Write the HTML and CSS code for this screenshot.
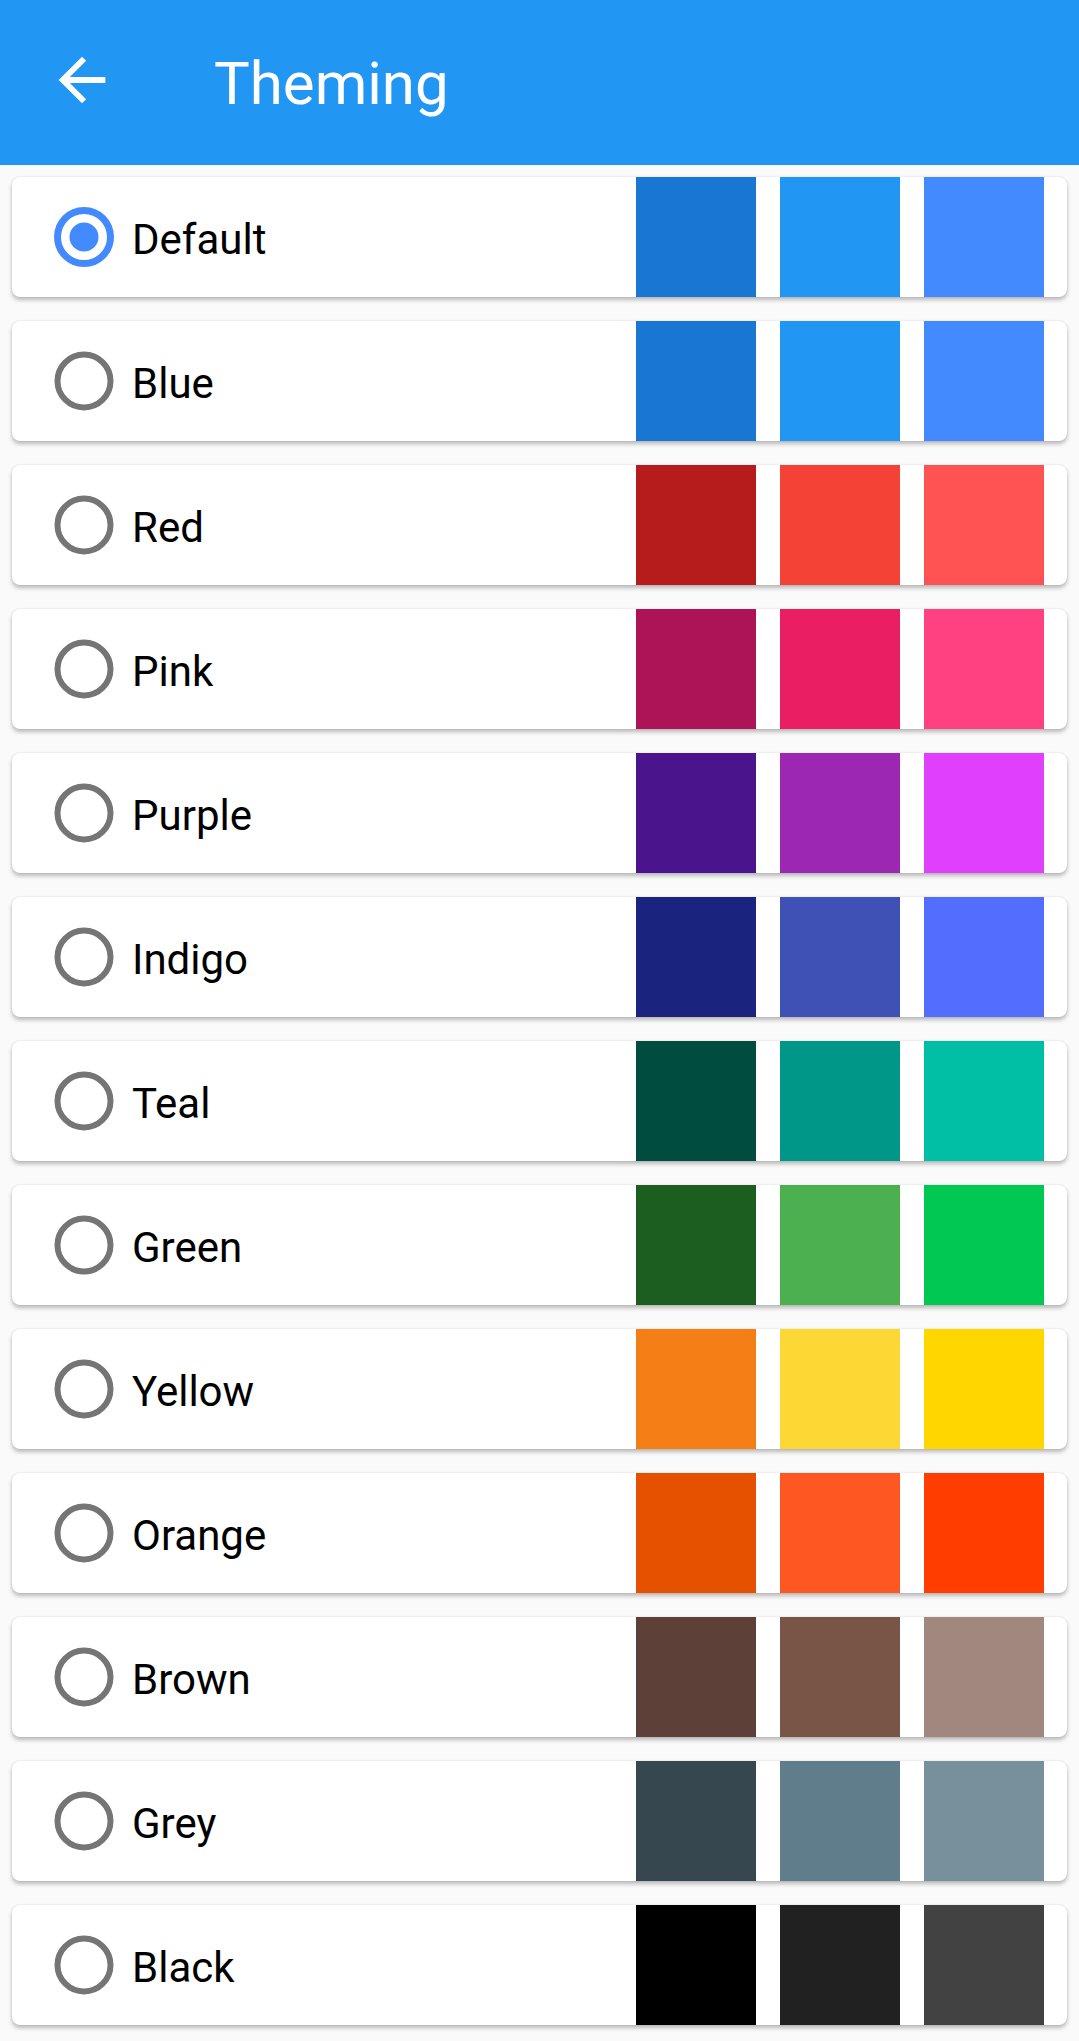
FILE: index.html
```html
<!DOCTYPE html>
<html>
<head>
<meta charset="utf-8">
<link rel="stylesheet" href="styles.css">
</head>
<body>
<header class="appbar">
  <svg class="back" viewBox="0 0 24 24" width="70" height="70"><path d="M20 11H7.83l5.59-5.59L12 4l-8 8 8 8 1.41-1.41L7.83 13H20v-2z" fill="#fff"/></svg>
  <h1 class="title">Theming</h1>
</header>
<main class="list">
  <div class="card">
    <svg class="radio" viewBox="0 0 60 60" width="60" height="60"><circle cx="30" cy="30" r="26.5" fill="none" stroke="#448AFF" stroke-width="7"/><circle cx="30" cy="30" r="14.5" fill="#448AFF"/></svg>
    <span class="label">Default</span>
    <div class="swatches"><i class="sw" style="background:#1976D2"></i><i class="sw" style="background:#2196F3"></i><i class="sw" style="background:#448AFF"></i></div>
  </div>
  <div class="card">
    <svg class="radio" viewBox="0 0 60 60" width="60" height="60"><circle cx="30" cy="30" r="26.5" fill="none" stroke="#757575" stroke-width="6"/></svg>
    <span class="label">Blue</span>
    <div class="swatches"><i class="sw" style="background:#1976D2"></i><i class="sw" style="background:#2196F3"></i><i class="sw" style="background:#448AFF"></i></div>
  </div>
  <div class="card">
    <svg class="radio" viewBox="0 0 60 60" width="60" height="60"><circle cx="30" cy="30" r="26.5" fill="none" stroke="#757575" stroke-width="6"/></svg>
    <span class="label">Red</span>
    <div class="swatches"><i class="sw" style="background:#B71C1C"></i><i class="sw" style="background:#F44336"></i><i class="sw" style="background:#FF5252"></i></div>
  </div>
  <div class="card">
    <svg class="radio" viewBox="0 0 60 60" width="60" height="60"><circle cx="30" cy="30" r="26.5" fill="none" stroke="#757575" stroke-width="6"/></svg>
    <span class="label">Pink</span>
    <div class="swatches"><i class="sw" style="background:#AD1457"></i><i class="sw" style="background:#E91E63"></i><i class="sw" style="background:#FF4081"></i></div>
  </div>
  <div class="card">
    <svg class="radio" viewBox="0 0 60 60" width="60" height="60"><circle cx="30" cy="30" r="26.5" fill="none" stroke="#757575" stroke-width="6"/></svg>
    <span class="label">Purple</span>
    <div class="swatches"><i class="sw" style="background:#4A148C"></i><i class="sw" style="background:#9C27B0"></i><i class="sw" style="background:#E040FB"></i></div>
  </div>
  <div class="card">
    <svg class="radio" viewBox="0 0 60 60" width="60" height="60"><circle cx="30" cy="30" r="26.5" fill="none" stroke="#757575" stroke-width="6"/></svg>
    <span class="label">Indigo</span>
    <div class="swatches"><i class="sw" style="background:#1A237E"></i><i class="sw" style="background:#3F51B5"></i><i class="sw" style="background:#536DFE"></i></div>
  </div>
  <div class="card">
    <svg class="radio" viewBox="0 0 60 60" width="60" height="60"><circle cx="30" cy="30" r="26.5" fill="none" stroke="#757575" stroke-width="6"/></svg>
    <span class="label">Teal</span>
    <div class="swatches"><i class="sw" style="background:#004D40"></i><i class="sw" style="background:#009688"></i><i class="sw" style="background:#00BFA5"></i></div>
  </div>
  <div class="card">
    <svg class="radio" viewBox="0 0 60 60" width="60" height="60"><circle cx="30" cy="30" r="26.5" fill="none" stroke="#757575" stroke-width="6"/></svg>
    <span class="label">Green</span>
    <div class="swatches"><i class="sw" style="background:#1B5E20"></i><i class="sw" style="background:#4CAF50"></i><i class="sw" style="background:#00C853"></i></div>
  </div>
  <div class="card">
    <svg class="radio" viewBox="0 0 60 60" width="60" height="60"><circle cx="30" cy="30" r="26.5" fill="none" stroke="#757575" stroke-width="6"/></svg>
    <span class="label">Yellow</span>
    <div class="swatches"><i class="sw" style="background:#F57F17"></i><i class="sw" style="background:#FDD835"></i><i class="sw" style="background:#FFD600"></i></div>
  </div>
  <div class="card">
    <svg class="radio" viewBox="0 0 60 60" width="60" height="60"><circle cx="30" cy="30" r="26.5" fill="none" stroke="#757575" stroke-width="6"/></svg>
    <span class="label">Orange</span>
    <div class="swatches"><i class="sw" style="background:#E65100"></i><i class="sw" style="background:#FF5722"></i><i class="sw" style="background:#FF3D00"></i></div>
  </div>
  <div class="card">
    <svg class="radio" viewBox="0 0 60 60" width="60" height="60"><circle cx="30" cy="30" r="26.5" fill="none" stroke="#757575" stroke-width="6"/></svg>
    <span class="label">Brown</span>
    <div class="swatches"><i class="sw" style="background:#5D4037"></i><i class="sw" style="background:#795548"></i><i class="sw" style="background:#A1887F"></i></div>
  </div>
  <div class="card">
    <svg class="radio" viewBox="0 0 60 60" width="60" height="60"><circle cx="30" cy="30" r="26.5" fill="none" stroke="#757575" stroke-width="6"/></svg>
    <span class="label">Grey</span>
    <div class="swatches"><i class="sw" style="background:#37474F"></i><i class="sw" style="background:#607D8B"></i><i class="sw" style="background:#78909C"></i></div>
  </div>
  <div class="card">
    <svg class="radio" viewBox="0 0 60 60" width="60" height="60"><circle cx="30" cy="30" r="26.5" fill="none" stroke="#757575" stroke-width="6"/></svg>
    <span class="label">Black</span>
    <div class="swatches"><i class="sw" style="background:#000000"></i><i class="sw" style="background:#212121"></i><i class="sw" style="background:#424242"></i></div>
  </div>
</main>
</body>
</html>
```
FILE: styles.css
```css
* { box-sizing: border-box; }
html, body { margin: 0; padding: 0; }
body {
  background: #fafafa;
  font-family: Roboto, "Noto Sans", "Liberation Sans", sans-serif;
  width: 1079px;
  height: 2041px;
  overflow: hidden;
}
.appbar {
  height: 165px;
  background: #2196F3;
  display: flex;
  align-items: center;
  padding-left: 47px;
}
.back { display: block; flex: none; margin-top: -5px; }
.title {
  margin: 0 0 0 97px;
  color: #fff;
  font-weight: 400;
  font-size: 60px;
  line-height: 1;
  padding-top: 2px;
}
.list {
  display: flex;
  flex-direction: column;
  gap: 24px;
  padding: 12px 12px 0 12px;
}
.card {
  height: 120px;
  background: #fff;
  border-radius: 8px;
  box-shadow: 0 3px 4px rgba(0,0,0,0.26), 0 0 2px rgba(0,0,0,0.12);
  display: flex;
  align-items: center;
  padding-left: 42px;
  padding-right: 23px;
}
.radio { display: block; flex: none; }
.label {
  margin-left: 18px;
  font-size: 42px;
  color: #000;
  line-height: 1;
  padding-top: 5px;
}
.swatches {
  margin-left: auto;
  display: flex;
  gap: 24px;
  height: 100%;
}
.sw {
  display: block;
  width: 120px;
  height: 100%;
}
```
